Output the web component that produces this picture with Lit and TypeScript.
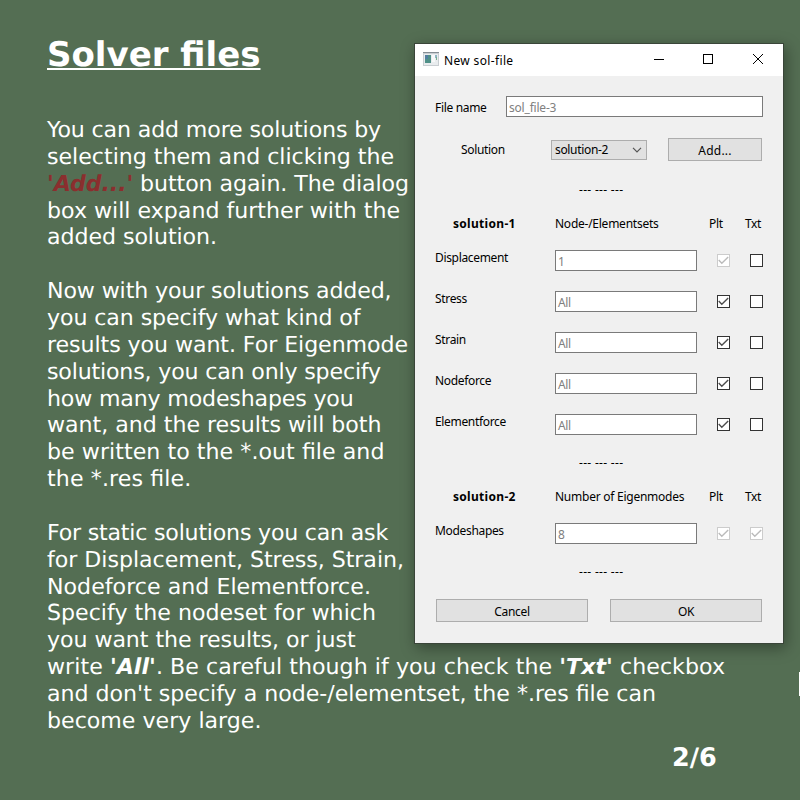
import { LitElement, html, svg, css, nothing } from "lit";
import { customElement, property } from "lit/decorators.js";

type Check = "on" | "off" | "locked";
interface ResultRow { label: string; value: string; plt: Check; txt: Check; }
interface Section { name: string; heading: string; rows: ResultRow[]; }

const SECTIONS: Section[] = [
  {
    name: "solution-1",
    heading: "Node-/Elementsets",
    rows: [
      { label: "Displacement", value: "1", plt: "locked", txt: "off" },
      { label: "Stress", value: "All", plt: "on", txt: "off" },
      { label: "Strain", value: "All", plt: "on", txt: "off" },
      { label: "Nodeforce", value: "All", plt: "on", txt: "off" },
      { label: "Elementforce", value: "All", plt: "on", txt: "off" },
    ],
  },
  {
    name: "solution-2",
    heading: "Number of Eigenmodes",
    rows: [{ label: "Modeshapes", value: "8", plt: "locked", txt: "locked" }],
  },
];

interface Line { width: number; parts: (string | { em: string; accent?: boolean })[]; }

const PARAGRAPHS: Line[][] = [
  [
    { width: 334, parts: ["You can add more solutions by"] },
    { width: 347, parts: ["selecting them and clicking the"] },
    { width: 362, parts: [{ em: "'Add...'", accent: true }, " button again. The dialog"] },
    { width: 353, parts: ["box will expand further with the"] },
    { width: 170, parts: ["added solution."] },
  ],
  [
    { width: 344.5, parts: ["Now with your solutions added,"] },
    { width: 313.5, parts: ["you can specify what kind of"] },
    { width: 361, parts: ["results you want. For Eigenmode"] },
    { width: 334, parts: ["solutions, you can only specify"] },
    { width: 306.5, parts: ["how many modeshapes you"] },
    { width: 334.5, parts: ["want, and the results will both"] },
    { width: 337.5, parts: ["be written to the *.out file and"] },
    { width: 144.5, parts: ["the *.res file."] },
  ],
  [
    { width: 341, parts: ["For static solutions you can ask"] },
    { width: 357, parts: ["for Displacement, Stress, Strain,"] },
    { width: 324, parts: ["Nodeforce and Elementforce."] },
    { width: 329, parts: ["Specify the nodeset for which"] },
    { width: 308.5, parts: ["you want the results, or just"] },
    { width: 678, parts: ["write ", { em: "'All'" }, ". Be careful though if you check the ", { em: "'Txt'" }, " checkbox"] },
    { width: 609, parts: ["and don't specify a node-/elementset, the *.res file can"] },
    { width: 214.5, parts: ["become very large."] },
  ],
];

/** One line of copy, tracked so that it is set to a given measure. */
@customElement("set-line")
class SetLine extends LitElement {
  @property({ attribute: false }) line!: Line;
  static styles = css`
    :host { display: block; white-space: pre; font-feature-settings: "liga" 1; }
    .run { display: inline-block; }
    .accent { color: #8b2e2e; }
    .em { font-weight: 700; font-style: oblique; }
  `;
  firstUpdated() {
    const run = this.renderRoot.querySelector<HTMLElement>(".run")!;
    const count = run.textContent!.length;
    const natural = run.getBoundingClientRect().width;
    let tracking = (this.line.width - natural) / count;
    run.style.letterSpacing = `${tracking}px`;
    tracking += (this.line.width - run.getBoundingClientRect().width) / count;
    run.style.letterSpacing = `${tracking}px`;
  }
  render() {
    return html`<span class="run">${this.line.parts.map((p) =>
      typeof p === "string" ? p : html`<span class="em ${p.accent ? "accent" : ""}">${p.em}</span>`)}</span>`;
  }
}

@customElement("check-box")
class CheckBox extends LitElement {
  @property() state: Check = "off";
  static styles = css`
    :host { display: block; width: 13px; height: 13px; }
    .box { display: block; width: 13px; height: 13px; color: #333; }
    .locked { color: #ccc; }
    .tick { stroke: #4d4d4d; }
    .locked .tick { stroke: #bbb; }
  `;
  render() {
    return html`<svg class="box ${this.state}" viewBox="0 0 13 13">
      <rect x=".5" y=".5" width="12" height="12" fill="#fff" stroke="currentColor"></rect>
      ${this.state === "off" ? nothing : svg`<path class="tick" d="M1.7 6.1L4.8 9.2L11.2 2.9" fill="none" stroke-width="1.4"></path>`}
    </svg>`;
  }
}

@customElement("sol-dialog")
class SolDialog extends LitElement {
  static styles = css`
    :host {
      display: block; box-sizing: border-box; width: 370px; height: 601px;
      border: 1px solid #3a4539; background: #f0f0f0; color: #000;
      box-shadow: 2px 4px 14px rgba(0, 0, 0, 0.36);
      font: 12px/18px "Noto Sans", "Open Sans", sans-serif;
      letter-spacing: -0.33px; white-space: nowrap;
    }
    .bar { display: flex; align-items: center; height: 32px; background: #fff; padding-left: 8px; }
    .logo { width: 16px; height: 14px; flex: none; margin-top: -2px; }
    .title { flex: 1; margin: 1px 0 0 5px; letter-spacing: 0.35px; }
    .controls { width: 110px; height: 10px; margin: -2px 20px 0 0; flex: none; }
    .row { display: grid; }
    .file { grid-template-columns: 71px 257px; margin: 20px 0 0 20px; height: 21px; }
    .field { box-sizing: border-box; height: 21px; border: 1px solid #7a7a7a; background: #fff; color: #808080; padding: 2px 0 0 2px; }
    .file .caption { padding-top: 3px; }
    .file .field { letter-spacing: -0.2px; }
    .solution { grid-template-columns: 90px 96px 94px; margin: 21px 0 0 46px; height: 23px; align-items: center; }
    .solution .caption { padding-top: 1px; }
    .combo { box-sizing: border-box; height: 20px; border: 1px solid #adadad; background: #e1e1e1; display: flex; align-items: center; justify-content: space-between; padding: 1px 4px 0 3px; }
    .button { box-sizing: border-box; height: 23px; border: 1px solid #adadad; background: #e1e1e1; text-align: center; line-height: 23px; }
    .add { margin-left: 21px; width: 94px; letter-spacing: 0.2px; }
    .arrow { width: 10px; height: 6px; }
    .dashes { height: 18px; margin-top: 19px; padding-left: 164px; letter-spacing: 0.3px; }
    .first { margin-top: 20px; }
    .head { grid-template-columns: 102px 154px 36px 30px; margin: 16px 0 0 38px; height: 18px; }
    .heading { letter-spacing: -0.25px; }
    .name { font-weight: 700; letter-spacing: 0.3px; }
    .data { grid-template-columns: 120px 142px 13px 13px; margin: 20px 0 0 20px; height: 21px; }
    .head + .data { margin-top: 17px; }
    .label { margin-top: -1px; }
    .plt { margin: 4px 0 0 20px; }
    .txt { margin: 4px 0 0 40px; }
    .actions { grid-template-columns: 152px 152px; column-gap: 22px; margin: 18px 0 0 21px; }
  `;
  renderSection(s: Section) {
    return html`
      <div class="row head"><span class="name">${s.name}</span><span class="heading">${s.heading}</span><span>Plt</span><span>Txt</span></div>
      ${s.rows.map((r) => html`<div class="row data">
        <span class="label">${r.label}</span><div class="field">${r.value}</div>
        <check-box class="plt" .state=${r.plt}></check-box><check-box class="txt" .state=${r.txt}></check-box>
      </div>`)}
      <div class="dashes">--- --- ---</div>`;
  }
  render() {
    return html`
      <div class="bar">
        <svg class="logo" viewBox="0 0 16 14">
          <rect width="16" height="14" fill="#c9ced2"></rect>
          <rect width="16" height="1" fill="#868e94"></rect>
          <rect x="1" y="2" width="14" height="11" fill="#e9ecee"></rect>
          <rect x="2" y="3" width="6" height="8" fill="#4f9088"></rect>
          <rect x="2" y="3" width="3" height="4" fill="#527fa0"></rect>
          <rect x="9" y="3" width="3" height="7" fill="#f8f9f9"></rect>
          <rect x="12" y="3" width="2" height="3" fill="#8fb4c4"></rect>
          <rect x="13" y="5" width="1" height="3" fill="#77ad8d"></rect>
        </svg>
        <span class="title">New sol-file</span>
        <svg class="controls" viewBox="0 0 110 10" fill="none" stroke="#000">
          <path d="M1 5.5H11"></path><rect x="50.5" y=".5" width="9" height="9"></rect>
          <path d="M100 0L110 10M110 0L100 10"></path>
        </svg>
      </div>
      <div class="row file"><span class="caption">File name</span><div class="field">sol_file-3</div></div>
      <div class="row solution">
        <span class="caption">Solution</span>
        <div class="combo"><span>solution-2</span>
          <svg class="arrow" viewBox="0 0 10 6"><path d="M1 .8L5 4.8L9 .8" fill="none" stroke="#555" stroke-width="1.2"></path></svg>
        </div>
        <div class="button add">Add...</div>
      </div>
      <div class="dashes first">--- --- ---</div>
      ${SECTIONS.map((s) => this.renderSection(s))}
      <div class="row actions"><div class="button">Cancel</div><div class="button">OK</div></div>`;
  }
}

@customElement("app-root")
class AppRoot extends LitElement {
  static styles = css`
    :host {
      display: block; position: relative; width: 800px; height: 800px; overflow: hidden;
      background: #546e53; color: #fff; font-family: "DejaVu Sans", sans-serif;
      text-rendering: geometricPrecision;
    }
    .page { padding: 35px 0 0 47px; }
    .heading { margin: 0 0 42px; font-size: 34px; line-height: 40px; font-weight: 700; text-decoration: underline; text-decoration-thickness: 2px; text-underline-offset: 2px; text-decoration-skip-ink: none; }
    .text { font-size: 22.1px; line-height: 26.86px; margin-bottom: 26.86px; }
    .count { position: absolute; left: 672px; top: 743px; font-size: 25.5px; line-height: 30px; font-weight: 700; }
    .dialog { position: absolute; left: 414px; top: 43px; text-rendering: auto; }
    .edge { position: absolute; left: 799px; top: 672px; width: 1px; height: 24px; background: #fff; }
  `;
  render() {
    return html`
      <div class="page">
        <h1 class="heading">Solver files</h1>
        ${PARAGRAPHS.map((lines) => html`<div class="text">${lines.map((l) => html`<set-line .line=${l}></set-line>`)}</div>`)}
      </div>
      <sol-dialog class="dialog"></sol-dialog>
      <div class="count">2/6</div>
      <div class="edge"></div>`;
  }
}
